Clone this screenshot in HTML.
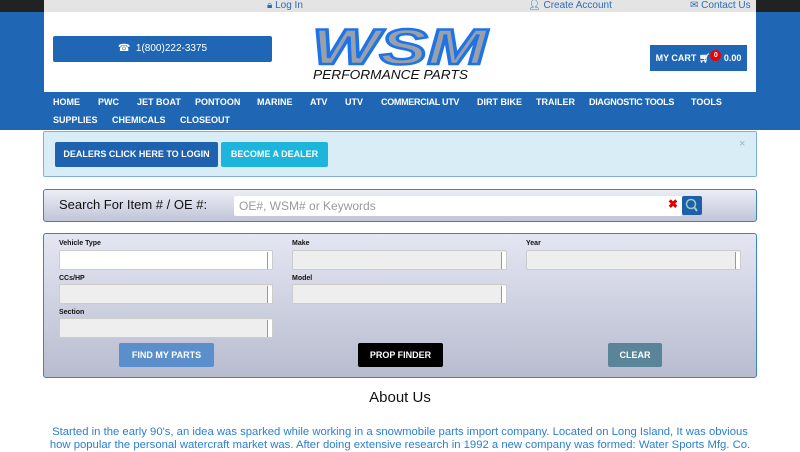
<!DOCTYPE html>
<html><head><style>
*{box-sizing:border-box;margin:0;padding:0}
body{width:800px;height:450px;overflow:hidden;background:#fff;font-family:"Liberation Sans",sans-serif;position:relative}
.abs{position:absolute}
.top{left:0;top:0;width:800px;height:12px;background:#222}
.topin{left:44px;top:0;width:712px;height:12px;background:#e4e4e4;font-size:10px;color:#2a6db8;line-height:12px}
.blue{left:0;top:12px;width:800px;height:118px;background:#1f67b5}
.white{left:44px;top:12px;width:712px;height:80px;background:#fff}
.btn{color:#fff;font-weight:bold;font-size:9px;text-align:center;border-radius:2px}
.n{position:absolute;color:#fff;font-size:9px;font-weight:bold;white-space:nowrap}
.sel{height:20px;background:#eee;border:1px solid #ccc;border-radius:2px}
.sel:after{content:"";position:absolute;right:0;top:1px;width:4px;height:17px;border-left:1px solid #999;background:#fff}
.lbl{font-size:7px;font-weight:bold;color:#111}
</style></head><body>
<div class="abs top"></div>
<div class="abs topin">
<span class="abs" style="left:223px">🔒︎ Log In</span>
<span class="abs" style="left:484px">👤︎ Create Account</span>
<span class="abs" style="left:646px">✉ Contact Us</span>
</div>
<div class="abs blue"></div>
<div class="abs white"></div>
<div class="abs btn" style="left:53px;top:36px;width:219px;height:26px;background:#1f67b5;line-height:26px;font-weight:normal;font-size:10px">☎ &nbsp;1(800)222-3375</div>
<svg class="abs" style="left:308px;top:24px" width="185" height="60">
<text x="4" y="40" font-family="Liberation Sans" font-weight="bold" font-style="italic" font-size="50" fill="#9aa0a8" stroke="#1e73e8" stroke-width="2.5" textLength="175" lengthAdjust="spacingAndGlyphs">WSM</text>
<text x="5" y="55" font-family="Liberation Sans" font-style="italic" font-size="13" fill="#111" textLength="155" lengthAdjust="spacingAndGlyphs">PERFORMANCE PARTS</text>
</svg>
<div class="abs btn" style="left:650px;top:45px;width:97px;height:26px;background:#1f67b5;line-height:26px;border-radius:0">MY CART 🛒︎<span style="display:inline-block;width:11px;height:11px;border-radius:50%;background:#e00;font-size:7px;line-height:11px;vertical-align:4px">0</span> 0.00</div>
<span class="n" style="left:53px;top:97px">HOME</span>
<span class="n" style="left:98px;top:97px">PWC</span>
<span class="n" style="left:137px;top:97px">JET BOAT</span>
<span class="n" style="left:195px;top:97px">PONTOON</span>
<span class="n" style="left:257px;top:97px">MARINE</span>
<span class="n" style="left:310px;top:97px">ATV</span>
<span class="n" style="left:345px;top:97px">UTV</span>
<span class="n" style="left:381px;top:97px;letter-spacing:-0.3px">COMMERCIAL UTV</span>
<span class="n" style="left:477px;top:97px">DIRT BIKE</span>
<span class="n" style="left:536px;top:97px">TRAILER</span>
<span class="n" style="left:589px;top:97px;letter-spacing:-0.3px">DIAGNOSTIC TOOLS</span>
<span class="n" style="left:691px;top:97px">TOOLS</span>
<span class="n" style="left:53px;top:115px">SUPPLIES</span>
<span class="n" style="left:112px;top:115px">CHEMICALS</span>
<span class="n" style="left:180px;top:115px">CLOSEOUT</span>
<div class="abs" style="left:43px;top:131px;width:714px;height:46px;background:#d9edf7;border:1px solid #7fb0de;border-radius:2px"></div>
<div class="abs btn" style="left:55px;top:142px;width:163px;height:25px;line-height:25px;background:#1f62b0">DEALERS CLICK HERE TO LOGIN</div>
<div class="abs btn" style="left:221px;top:142px;width:107px;height:25px;line-height:25px;background:#1db5dc">BECOME A DEALER</div>
<div class="abs" style="left:739px;top:138px;color:#aac;font-size:11px">×</div>
<div class="abs" style="left:43px;top:189px;width:714px;height:33px;background:linear-gradient(#eceef6,#c0c4d8);border:1px solid #3d7fc8;border-radius:3px"></div>
<div class="abs" style="left:59px;top:197px;font-size:13px;color:#111">Search For Item # / OE #:</div>
<div class="abs" style="left:234px;top:196px;width:448px;height:20px;background:#fff;border-radius:2px;font-size:12px;color:#999;line-height:20px;padding-left:5px">OE#, WSM# or Keywords</div>
<div class="abs" style="left:668px;top:197px;color:#d00;font-size:12px;font-weight:bold">✖</div>
<div class="abs" style="left:682px;top:196px;width:20px;height:19px;background:#1f5fa8;border-radius:2px"><svg width="20" height="19"><circle cx="9" cy="8" r="4.5" stroke="#9cc" stroke-width="1.5" fill="none"/><line x1="12" y1="11" x2="15" y2="15" stroke="#9cc" stroke-width="2"/></svg></div>
<div class="abs" style="left:43px;top:233px;width:714px;height:145px;background:linear-gradient(#e4e6f2,#b8bccf);border:1px solid #3d7fc8;border-radius:3px"></div>
<div class="abs lbl" style="left:59px;top:240px">Vehicle Type</div>
<div class="abs lbl" style="left:292px;top:240px">Make</div>
<div class="abs lbl" style="left:526px;top:240px">Year</div>
<div class="abs sel" style="left:59px;top:250px;width:214px;background:#fff"></div>
<div class="abs sel" style="left:292px;top:250px;width:215px"></div>
<div class="abs sel" style="left:526px;top:250px;width:215px"></div>
<div class="abs lbl" style="left:59px;top:275px">CCs/HP</div>
<div class="abs lbl" style="left:292px;top:275px">Model</div>
<div class="abs sel" style="left:59px;top:284px;width:214px"></div>
<div class="abs sel" style="left:292px;top:284px;width:215px"></div>
<div class="abs lbl" style="left:59px;top:309px">Section</div>
<div class="abs sel" style="left:59px;top:318px;width:214px"></div>
<div class="abs btn" style="left:119px;top:343px;width:95px;height:24px;line-height:24px;background:#5b8fcc">FIND MY PARTS</div>
<div class="abs btn" style="left:358px;top:343px;width:85px;height:24px;line-height:24px;background:#000">PROP FINDER</div>
<div class="abs btn" style="left:608px;top:343px;width:54px;height:24px;line-height:24px;background:#5a8498">CLEAR</div>
<div class="abs" style="left:0;top:389px;width:800px;text-align:center;font-size:15px;color:#111">About Us</div>
<div class="abs" style="left:44px;top:426px;width:712px;text-align:center;font-size:11.3px;color:#2a7fd0;line-height:13px">Started in the early 90's, an idea was sparked while working in a snowmobile parts import company. Located on Long Island, It was obvious how popular the personal watercraft market was. After doing extensive research in 1992 a new company was formed: Water Sports Mfg. Co.</div>
</body></html>
